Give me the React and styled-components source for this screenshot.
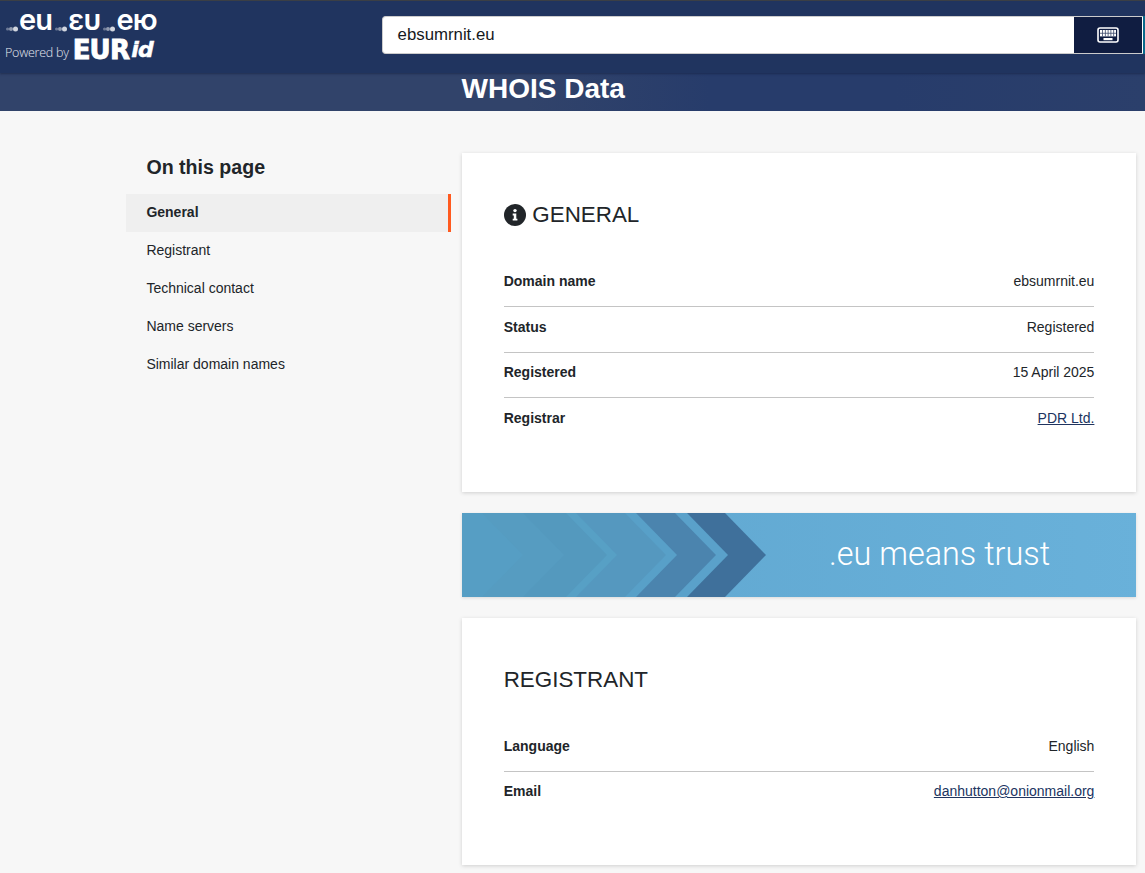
import React from "react";
import styled, { createGlobalStyle } from "styled-components";

const Global = createGlobalStyle`
  html, body { margin: 0; padding: 0; background: #f7f7f7; }
  body { font-family: "Liberation Sans", Arial, sans-serif; color: #212529; overflow: hidden; height: 873px; }
`;
const Page = styled.div`width: 1145px; height: 873px; overflow: hidden;`;
const Header = styled.header`
  height: 73px; box-sizing: border-box; border-top: 1px solid #3b3f45; background: #20345f;
  display: flex; align-items: flex-start; position: relative; z-index: 1;
  box-shadow: 0 1px 2px rgba(15, 25, 55, .5);
`;
const Logo = styled.div`width: 382px; flex: none; padding: 6px 0 0 6px; box-sizing: border-box; color: #fff;`;
const LogoTop = styled.div`display: flex; height: 26px; align-items: flex-end; gap: 3px;`;
const LogoWord = styled.span`
  display: flex; align-items: baseline; font-family: Inter, sans-serif; font-size: 29px; line-height: 26px;
  font-weight: 600; letter-spacing: -.8px; height: 26px;
`;
const Dots = styled.svg`width: 13px; height: 6px; flex: none; align-self: flex-end; margin-bottom: 1px;`;
const LogoBottom = styled.div`display: flex; align-items: flex-end; margin: 6px 0 0 -1px; height: 21px;`;
const Powered = styled.span`font-size: 12.5px; font-weight: 300; color: #e6e9ef; line-height: 15px; margin-right: 4px; font-family: "Open Sans", sans-serif; letter-spacing: -.25px;`;
const Eur = styled.span`font-family: "DejaVu Sans", sans-serif; font-size: 26px; font-weight: 700; line-height: 20px; letter-spacing: -.8px; -webkit-text-stroke: .9px #fff;`;
const Id = styled.span`font-family: "DejaVu Sans", sans-serif; font-size: 22px; font-weight: 700; font-style: italic; line-height: 20px; letter-spacing: -.8px; margin-left: 2px; -webkit-text-stroke: .5px #fff;`;
const Search = styled.div`
  margin-top: 15px; width: 761px; height: 38px; box-sizing: border-box; display: flex; flex: none;
  background: #fff; border: 1px solid #ccc; border-right: none; border-radius: 4px 0 0 4px;
`;
const SearchInput = styled.div`flex: 1; font-size: 16.8px; line-height: 36px; padding-left: 14.6px; color: #16191d;`;
const KeyButton = styled.div`
  width: 68px; background: #101d41; display: flex; align-items: center; justify-content: center;
  margin-right: 1px;
`;
const Edge = styled.div`margin-top: 15px; width: 2px; height: 38px; background: #0a6a8c; flex: none;`;
const Band = styled.div`
  height: 38px; background: linear-gradient(90deg, #31436a 0%, #31436a 46%, #273c6b 62%, #273c6b 78%, #2b3f6b 100%);
  display: flex; align-items: center; padding: 0 0 6px 461.5px; box-sizing: border-box;
`;
const Title = styled.h1`margin: 0; color: #fff; font-size: 28px; font-weight: 700; line-height: 32px;`;
const Main = styled.main`display: flex; align-items: flex-start; padding-top: 42px;`;
const Side = styled.aside`width: 325px; margin-left: 126px; flex: none; margin-right: 11px;`;
const SideTitle = styled.h2`margin: 0 0 13px 20.4px; font-size: 19.6px; line-height: 28px; font-weight: 700; color: #212529;`;
const NavItem = styled.div`
  height: 38px; line-height: 37px; padding-left: 20.4px; font-size: 14px;
  font-weight: ${p => (p.$active ? 700 : 400)};
  background: ${p => (p.$active ? "#efefef" : "transparent")};
  border-right: 3px solid ${p => (p.$active ? "#ff5a1f" : "transparent")};
`;
const Column = styled.div`width: 674px; flex: none; display: flex; flex-direction: column; gap: 21px;`;
const Card = styled.section`
  background: #fff; padding: 42px 41.6px 42px 41.7px; box-sizing: border-box; height: ${p => p.$h}px;
  box-shadow: 0 1px 4px rgba(0, 0, 0, .16);
`;
const CardTitle = styled.h3`
  margin: 0 0 ${p => p.$after}px; font-size: 22.4px; line-height: 40px; height: 40px; font-weight: 400; color: #212529;
  display: flex; align-items: center; gap: 6.6px;
`;
const Row = styled.div`
  display: flex; justify-content: space-between; height: 45.5px; box-sizing: border-box; padding-top: ${p => p.$pad || 10.9}px; line-height: 18px;
  font-size: 14px; border-bottom: ${p => (p.$last ? "none" : "1px solid #c4c4c4")}; color: #212529;
`;
const Label = styled.span`font-weight: 700;`;
const Link = styled.a`color: #20345f; text-decoration: underline;`;
const Banner = styled.div`height: 84px; overflow: hidden; box-shadow: 0 1px 3px rgba(0,0,0,.12);`;
const BannerText = styled.text`font-family: Roboto, sans-serif; font-size: 32.4px; font-weight: 300; fill: #fff;`;

const Keyboard = () => (
  <svg width="22" height="16" viewBox="0 0 22 16">
    <rect x="1" y="1" width="20" height="14" rx="2" fill="#101d41" stroke="#fff" strokeWidth="1.6" />
    <rect x="3" y="3" width="16" height="6.4" fill="#fff" />
    <g fill="#3d4a6b">
      {[5.5, 8.3, 11.1, 13.9, 16.7].map(x => <rect key={x} x={x - .4} y="3" width="0.8" height="6.4" />)}
      <rect x="3" y="5.8" width="16" height="0.8" />
    </g>
    <rect x="6.5" y="11" width="9" height="2.2" fill="#fff" />
  </svg>
);

const DotMark = () => (
  <Dots viewBox="0 0 13 6">
    <circle cx="1.6" cy="3" r="1.6" fill="#fff" opacity=".35" />
    <circle cx="5" cy="3" r="2" fill="#fff" opacity=".5" />
    <circle cx="9.5" cy="3" r="2.5" fill="#fff" opacity=".8" />
  </Dots>
);

const InfoIcon = () => (
  <svg width="22" height="22" viewBox="0 0 22 22">
    <circle cx="11" cy="11" r="11" fill="#212529" />
    <circle cx="11" cy="6.6" r="1.7" fill="#fff" />
    <path d="M8.7 9.6h3.6v5.2h1.1v1.8H8.7v-1.8h1.1v-3.4H8.7z" fill="#fff" />
  </svg>
);

const arrow = (r, fill) => (
  <polygon key={r} points={`-60,0 ${r},0 ${r + 41},42 ${r},84 -60,84`} fill={fill} />
);

const BannerArt = () => (
  <svg width="683" height="84" viewBox="0 0 683 84" style={{ display: "block" }}>
    <defs>
      <linearGradient id="bg" x1="0" x2="1" y1="0" y2="0">
        <stop offset="0" stopColor="#5fa6cf" />
        <stop offset="1" stopColor="#69b1da" />
      </linearGradient>
    </defs>
    <rect width="683" height="84" fill="url(#bg)" />
    {arrow(263, "#3f709b")}
    <polygon points="-60,0 225,0 266,42 225,84 -60,84" fill="#5aa1ca" />
    {arrow(213, "#4b84ae")}
    {arrow(174, "#58a0c8")}
    {arrow(163, "#5598bf")}
    {arrow(114, "#57a0c5")}
    {arrow(104, "#5499be")}
    {arrow(61, "#569cc1")}
    {arrow(20, "#569ec4")}
    <BannerText x="367" y="52">.eu means trust</BannerText>
  </svg>
);

export default function App() {
  return (
    <Page>
      <Global />
      <Header>
        <Logo>
          <LogoTop>
            <LogoWord><DotMark />eu</LogoWord>
            <LogoWord><DotMark />ευ</LogoWord>
            <LogoWord><DotMark />ею</LogoWord>
          </LogoTop>
          <LogoBottom>
            <Powered>Powered by</Powered>
            <Eur>EUR</Eur><Id>id</Id>
          </LogoBottom>
        </Logo>
        <Search>
          <SearchInput>ebsumrnit.eu</SearchInput>
          <KeyButton><Keyboard /></KeyButton>
        </Search>
        <Edge />
      </Header>
      <Band><Title>WHOIS Data</Title></Band>
      <Main>
        <Side>
          <SideTitle>On this page</SideTitle>
          <NavItem $active>General</NavItem>
          <NavItem>Registrant</NavItem>
          <NavItem>Technical contact</NavItem>
          <NavItem>Name servers</NavItem>
          <NavItem>Similar domain names</NavItem>
        </Side>
        <Column>
          <Card $h={339}>
            <CardTitle $after={26.5}><InfoIcon />GENERAL</CardTitle>
            <Row><Label>Domain name</Label><span>ebsumrnit.eu</span></Row>
            <Row><Label>Status</Label><span>Registered</span></Row>
            <Row><Label>Registered</Label><span>15 April 2025</span></Row>
            <Row $last><Label>Registrar</Label><Link href="#">PDR Ltd.</Link></Row>
          </Card>
          <Banner><BannerArt /></Banner>
          <Card $h={247}>
            <CardTitle $after={26.2}>REGISTRANT</CardTitle>
            <Row><Label>Language</Label><span>English</span></Row>
            <Row $last $pad={10.4}><Label>Email</Label><Link href="#">danhutton@onionmail.org</Link></Row>
          </Card>
        </Column>
      </Main>
    </Page>
  );
}
